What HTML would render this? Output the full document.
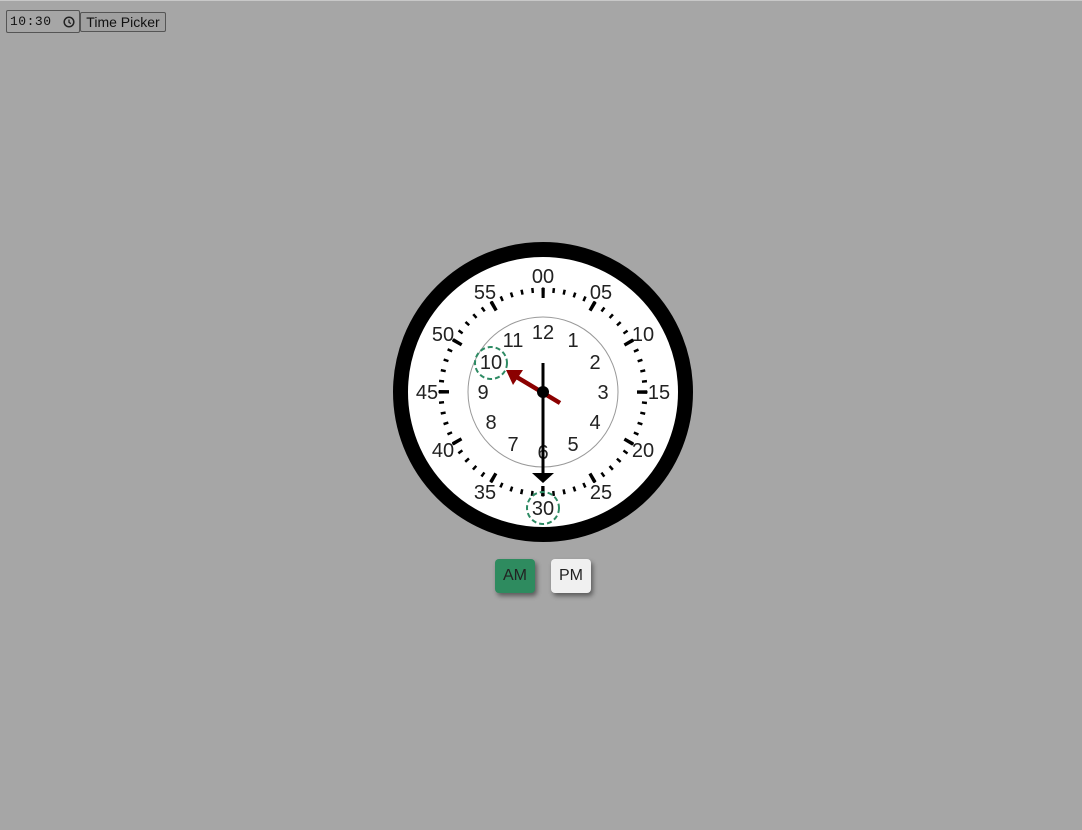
<!DOCTYPE html>
<html><head><style>
html,body{margin:0;padding:0;}
body{width:1082px;height:829px;background:#a6a6a6;border-top:1px solid #c8c8c8;box-sizing:border-box;position:relative;font-family:"Liberation Sans",sans-serif;overflow:hidden;}
.inp{position:absolute;left:6px;top:9px;width:74px;height:23px;border:1px solid #555;border-radius:2px;box-sizing:border-box;font-family:"Liberation Mono",monospace;font-size:13px;line-height:21px;padding-left:3px;color:#111;letter-spacing:0.5px;}
.btn{position:absolute;left:80px;top:11px;width:86px;height:20px;border:1px solid #555;border-radius:2px;box-sizing:border-box;background:#a0a0a0;font-size:14px;line-height:18px;text-align:center;color:#111;}
.b{position:absolute;top:558px;width:40px;height:34px;border-radius:4px;font-size:16px;line-height:34px;text-align:center;color:#222;box-shadow:2px 3px 5px rgba(0,0,0,.45);}
</style></head><body>
<div class="inp">10:30<svg style="position:absolute;right:4px;top:5px" width="12" height="12" viewBox="0 0 12 12"><circle cx="6" cy="6" r="4.8" fill="none" stroke="#222" stroke-width="1.5"/><path d="M6 3.5V6.3L7.8 7.6" fill="none" stroke="#222" stroke-width="1.3"/></svg></div>
<div class="btn">Time Picker</div>
<svg style="position:absolute;left:0;top:0" width="1082" height="829">
<circle cx="543" cy="391" r="142.5" fill="#fff" stroke="#000" stroke-width="15"/>
<circle cx="543" cy="391" r="102" fill="none" stroke="#000" stroke-width="5" stroke-dasharray="2.5 8.181" stroke-dashoffset="1.25" transform="rotate(-90 543 391)"/>
<circle cx="543" cy="391" r="99" fill="none" stroke="#000" stroke-width="10" stroke-dasharray="3.5 48.336" stroke-dashoffset="1.75" transform="rotate(-90 543 391)"/>
<circle cx="543" cy="391" r="75" fill="none" stroke="#999" stroke-width="1"/>
<g font-family="Liberation Sans,sans-serif" font-size="20" fill="#222" text-anchor="middle" dominant-baseline="central">
<text x="543" y="276">00</text><text x="601" y="292">05</text><text x="643" y="334">10</text><text x="659" y="392">15</text><text x="643" y="450">20</text><text x="601" y="492">25</text><text x="543" y="508">30</text><text x="485" y="492">35</text><text x="443" y="450">40</text><text x="427" y="392">45</text><text x="443" y="334">50</text><text x="485" y="292">55</text>
<text x="543" y="332">12</text><text x="573" y="340">1</text><text x="595" y="362">2</text><text x="603" y="392">3</text><text x="595" y="422">4</text><text x="573" y="444">5</text><text x="543" y="452">6</text><text x="513" y="444">7</text><text x="491" y="422">8</text><text x="483" y="392">9</text><text x="491" y="362">10</text><text x="513" y="340">11</text>
</g>
<circle cx="491" cy="362" r="16" fill="none" stroke="#2e8b64" stroke-width="2" stroke-dasharray="5 3"/>
<circle cx="543" cy="507" r="16" fill="none" stroke="#2e8b64" stroke-width="2" stroke-dasharray="5 3"/>
<line x1="560" y1="402" x2="515" y2="375" stroke="#8b0000" stroke-width="4.5"/>
<polygon points="506,369 523,369 513,384" fill="#8b0000"/>
<line x1="543" y1="362" x2="543" y2="474" stroke="#000" stroke-width="3"/>
<polygon points="532,472 554,472 543,482" fill="#000"/>
<circle cx="543" cy="391" r="6" fill="#000"/>
</svg>
<div class="b" style="left:495px;background:#2e8b5f;">AM</div>
<div class="b" style="left:551px;background:#f0f0f0;">PM</div>
</body></html>
